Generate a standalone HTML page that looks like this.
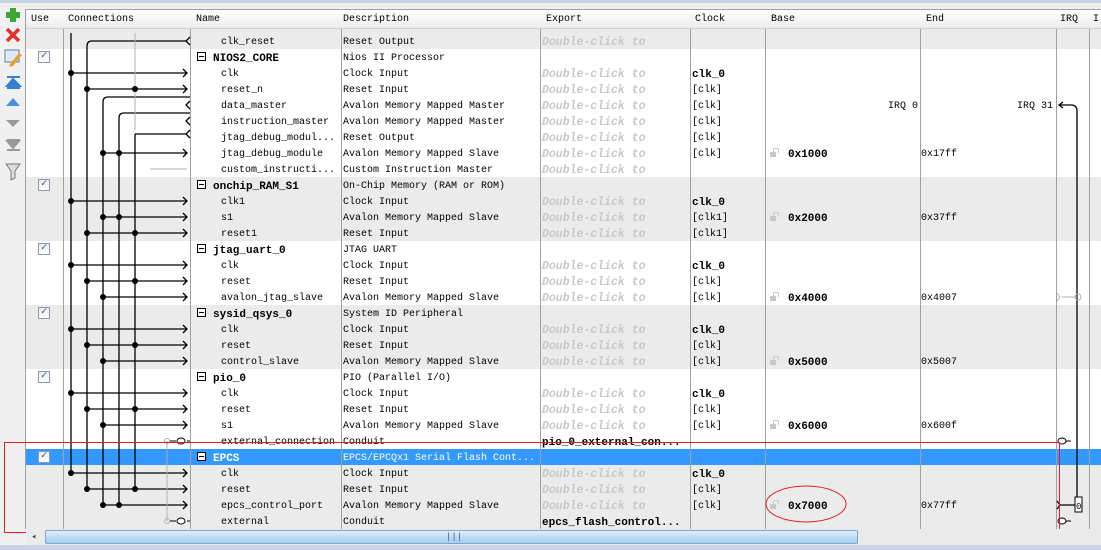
<!DOCTYPE html>
<html><head><meta charset="utf-8"><style>
*{margin:0;padding:0;box-sizing:border-box}
body{width:1101px;height:550px;overflow:hidden;background:#f0f0f0;font-family:"Liberation Mono",monospace;font-size:10px;color:#000;position:relative}
.abs{position:absolute}
#top{left:0;top:0;width:1101px;height:3px;background:#c5d3e6}
#tb{left:0;top:3px;width:25px;height:542px;background:#f0f0f0}
#tbl{left:25px;top:9px;width:1076px;height:520px;background:#fff;border-left:1px solid #a0a0a0;border-top:1px solid #a0a0a0}
#hdr{left:26px;top:10px;width:1075px;height:19px;background:linear-gradient(#ffffff,#ececec);border-bottom:1px solid #d0d0d0}
.h{position:absolute;top:11px;line-height:17px;font-size:10px}
.r{position:absolute;left:26px;width:1075px;height:16px;line-height:16px;white-space:nowrap}
.g{background:#ebebeb}
.w{background:#fff}
.s{background:#3399ff;color:#fff}
.r span{position:absolute;top:2px}
.n{left:195px}.nb{left:187px;font-weight:bold;font-size:11px}
.d{left:317px}
.e{left:516px;color:#c8c8c8;font-weight:bold;font-style:italic;font-size:11.5px}
.eb{left:516px;font-weight:bold;font-size:11px}
.c{left:666px}.cb{left:666px;font-weight:bold;font-size:11px}
.bv{left:762px;font-weight:bold;font-size:11px}
.r span.lk{left:744px;top:7px;width:6px;height:5px;background:#c8c8c8}
.r span.lk:before{content:"";position:absolute;left:3px;top:-4px;width:4px;height:4px;border:1px solid #c8c8c8;border-bottom:none;border-radius:2px 2px 0 0}
.en{left:895px}
.vl{position:absolute;top:29px;width:1px;height:500px;background:#a0a0a0}
.cb2{position:absolute;left:12px;top:2px;width:12px;height:12px;border:1px solid #8a9bb0;background:linear-gradient(#e8edf3,#fff);color:#2a4a8a;font-size:10px;line-height:10px;text-align:center}
.bx{position:absolute;left:171px;top:3px;width:9px;height:9px;border:1px solid #000;background:#fff}
.bx:after{content:"";position:absolute;left:1px;top:3px;width:5px;height:1px;background:#000}
#sb{left:26px;top:529px;width:1075px;height:16px;background:#eaeaea}
#th{left:45px;top:530px;width:813px;height:14px;border:1px solid #7ea6cf;border-radius:2px;background:linear-gradient(#e3f0fb,#bcdcf5 50%,#a6cdef)}
#bot{left:0;top:545px;width:1101px;height:5px;background:#c8d4e4}
</style></head><body>
<div id="top" class="abs"></div>
<div id="tb" class="abs"></div>
<svg class="abs" style="left:0;top:0" width="26" height="190">
<path d="M10 8h6v4h4v6h-4v4h-6v-4h-4v-6h4z" fill="#3aa63a"/>
<path d="M7 29l12 12M19 29l-12 12" stroke="#e03030" stroke-width="3.5"/>
<rect x="5" y="50" width="14" height="12" fill="#dfe9f5" stroke="#5a80b8"/><path d="M10 64l9-11 3 2-9 11-4 1z" fill="#e8a030"/>
<path d="M7 77h13M7 88h13M13 79l-6 7h13z" stroke="#3580d0" fill="#3580d0" stroke-width="2"/>
<path d="M6 106l7-8 7 8z" fill="#4a90d9"/>
<path d="M6 120l7 7 7-7z" fill="#999"/>
<path d="M7 140h13M7 150h13M7 141l6 7 6-7z" stroke="#999" fill="#999" stroke-width="2"/>
<path d="M6 164h14l-5 7v7l-4 2v-9z" fill="#ddd" stroke="#777"/>
</svg>
<div id="tbl" class="abs"></div>
<div id="hdr" class="abs"></div>
<div class="h" style="left:31px">Use</div>
<div class="h" style="left:68px">Connections</div>
<div class="h" style="left:196px">Name</div>
<div class="h" style="left:343px">Description</div>
<div class="h" style="left:546px">Export</div>
<div class="h" style="left:695px">Clock</div>
<div class="h" style="left:771px">Base</div>
<div class="h" style="left:926px">End</div>
<div class="h" style="left:1060px">IRQ</div>
<div class="h" style="left:1093px">I</div>

<div class="r g" style="top:29px;height:4px"></div>
<div class="r g" style="top:33px"><span class="n">clk_reset</span><span class="d">Reset Output</span><span class="e">Double-click to</span></div>
<div class="r w" style="top:49px"><div class="cb2">✓</div><div class="bx"></div><span class="nb">NIOS2_CORE</span><span class="d">Nios II Processor</span></div>
<div class="r w" style="top:65px"><span class="n">clk</span><span class="d">Clock Input</span><span class="e">Double-click to</span><span class="cb">clk_0</span></div>
<div class="r w" style="top:81px"><span class="n">reset_n</span><span class="d">Reset Input</span><span class="e">Double-click to</span><span class="c">[clk]</span></div>
<div class="r w" style="top:97px"><span class="n">data_master</span><span class="d">Avalon Memory Mapped Master</span><span class="e">Double-click to</span><span class="c">[clk]</span><span style="left:862px">IRQ 0</span><span style="left:991px">IRQ 31</span></div>
<div class="r w" style="top:113px"><span class="n">instruction_master</span><span class="d">Avalon Memory Mapped Master</span><span class="e">Double-click to</span><span class="c">[clk]</span></div>
<div class="r w" style="top:129px"><span class="n">jtag_debug_modul...</span><span class="d">Reset Output</span><span class="e">Double-click to</span><span class="c">[clk]</span></div>
<div class="r w" style="top:145px"><span class="n">jtag_debug_module</span><span class="d">Avalon Memory Mapped Slave</span><span class="e">Double-click to</span><span class="c">[clk]</span><span class="lk"></span><span class="bv">0x1000</span><span class="en">0x17ff</span></div>
<div class="r w" style="top:161px"><span class="n">custom_instructi...</span><span class="d">Custom Instruction Master</span><span class="e">Double-click to</span></div>
<div class="r g" style="top:177px"><div class="cb2">✓</div><div class="bx"></div><span class="nb">onchip_RAM_S1</span><span class="d">On-Chip Memory (RAM or ROM)</span></div>
<div class="r g" style="top:193px"><span class="n">clk1</span><span class="d">Clock Input</span><span class="e">Double-click to</span><span class="cb">clk_0</span></div>
<div class="r g" style="top:209px"><span class="n">s1</span><span class="d">Avalon Memory Mapped Slave</span><span class="e">Double-click to</span><span class="c">[clk1]</span><span class="lk"></span><span class="bv">0x2000</span><span class="en">0x37ff</span></div>
<div class="r g" style="top:225px"><span class="n">reset1</span><span class="d">Reset Input</span><span class="e">Double-click to</span><span class="c">[clk1]</span></div>
<div class="r w" style="top:241px"><div class="cb2">✓</div><div class="bx"></div><span class="nb">jtag_uart_0</span><span class="d">JTAG UART</span></div>
<div class="r w" style="top:257px"><span class="n">clk</span><span class="d">Clock Input</span><span class="e">Double-click to</span><span class="cb">clk_0</span></div>
<div class="r w" style="top:273px"><span class="n">reset</span><span class="d">Reset Input</span><span class="e">Double-click to</span><span class="c">[clk]</span></div>
<div class="r w" style="top:289px"><span class="n">avalon_jtag_slave</span><span class="d">Avalon Memory Mapped Slave</span><span class="e">Double-click to</span><span class="c">[clk]</span><span class="lk"></span><span class="bv">0x4000</span><span class="en">0x4007</span></div>
<div class="r g" style="top:305px"><div class="cb2">✓</div><div class="bx"></div><span class="nb">sysid_qsys_0</span><span class="d">System ID Peripheral</span></div>
<div class="r g" style="top:321px"><span class="n">clk</span><span class="d">Clock Input</span><span class="e">Double-click to</span><span class="cb">clk_0</span></div>
<div class="r g" style="top:337px"><span class="n">reset</span><span class="d">Reset Input</span><span class="e">Double-click to</span><span class="c">[clk]</span></div>
<div class="r g" style="top:353px"><span class="n">control_slave</span><span class="d">Avalon Memory Mapped Slave</span><span class="e">Double-click to</span><span class="c">[clk]</span><span class="lk"></span><span class="bv">0x5000</span><span class="en">0x5007</span></div>
<div class="r w" style="top:369px"><div class="cb2">✓</div><div class="bx"></div><span class="nb">pio_0</span><span class="d">PIO (Parallel I/O)</span></div>
<div class="r w" style="top:385px"><span class="n">clk</span><span class="d">Clock Input</span><span class="e">Double-click to</span><span class="cb">clk_0</span></div>
<div class="r w" style="top:401px"><span class="n">reset</span><span class="d">Reset Input</span><span class="e">Double-click to</span><span class="c">[clk]</span></div>
<div class="r w" style="top:417px"><span class="n">s1</span><span class="d">Avalon Memory Mapped Slave</span><span class="e">Double-click to</span><span class="c">[clk]</span><span class="lk"></span><span class="bv">0x6000</span><span class="en">0x600f</span></div>
<div class="r w" style="top:433px"><span class="n">external_connection</span><span class="d">Conduit</span><span class="eb">pio_0_external_con...</span></div>
<div class="r s" style="top:449px"><div class="cb2">✓</div><div class="bx"></div><span class="nb">EPCS</span><span class="d">EPCS/EPCQx1 Serial Flash Cont...</span></div>
<div class="r g" style="top:465px"><span class="n">clk</span><span class="d">Clock Input</span><span class="e">Double-click to</span><span class="cb">clk_0</span></div>
<div class="r g" style="top:481px"><span class="n">reset</span><span class="d">Reset Input</span><span class="e">Double-click to</span><span class="c">[clk]</span></div>
<div class="r g" style="top:497px"><span class="n">epcs_control_port</span><span class="d">Avalon Memory Mapped Slave</span><span class="e">Double-click to</span><span class="c">[clk]</span><span class="lk"></span><span class="bv">0x7000</span><span class="en">0x77ff</span></div>
<div class="r g" style="top:513px"><span class="n">external</span><span class="d">Conduit</span><span class="eb">epcs_flash_control...</span></div>

<div class="vl" style="left:63px"></div><div class="vl" style="left:190px"></div><div class="vl" style="left:341px"></div><div class="vl" style="left:540px"></div><div class="vl" style="left:690px"></div><div class="vl" style="left:765px"></div><div class="vl" style="left:920px"></div><div class="vl" style="left:1056px"></div><div class="vl" style="left:1089px"></div>

<svg class="abs" style="left:0;top:0" width="1101" height="550">
<g stroke="#000" stroke-width="1.3" fill="none">
<path d="M71 33V473M87 489V46q0-5 5-5h95M103 505V102q0-5 5-5h82M119 505V118q0-5 5-5h66M135 489V134M135 134h52"/>
<path d="M71 73h116M87 89h100M103 153h84M71 201h116M103 217h84M87 233h100M71 265h116M87 281h100M103 297h84M71 329h116M87 345h100M103 361h84M71 393h116M87 409h100M103 425h84M71 473h116M87 489h100M103 505h84"/>
<path d="M183 69l4 4-4 4M183 85l4 4-4 4M183 149l4 4-4 4M183 197l4 4-4 4M183 213l4 4-4 4M183 229l4 4-4 4M183 261l4 4-4 4M183 277l4 4-4 4M183 293l4 4-4 4M183 325l4 4-4 4M183 341l4 4-4 4M183 357l4 4-4 4M183 389l4 4-4 4M183 405l4 4-4 4M183 421l4 4-4 4M183 469l4 4-4 4M183 485l4 4-4 4M183 501l4 4-4 4"/>
<path d="M190 37l-4 4 4 4M190 101l-4 4 4 4M190 117l-4 4 4 4M190 130l-4 4 4 4"/>
<path d="M1077 505V111q0-6-6-6h-12M1063 102l-4 3 4 3M1057 501l3 4-3 4M1060 505h16"/>
</g>
<g stroke="#b0b0b0" fill="none"><path d="M135 33V130M150 169h37M167 441V521M1062 297h15M1057 293l3 4-3 4"/><circle cx="1078" cy="297" r="3"/><circle cx="167" cy="441" r="2.5"/><circle cx="167" cy="521" r="2.5"/></g>
<g fill="#000"><circle cx="71" cy="73" r="3"/><circle cx="87" cy="89" r="3"/><circle cx="135" cy="89" r="3"/><circle cx="103" cy="153" r="3"/><circle cx="119" cy="153" r="3"/><circle cx="71" cy="201" r="3"/><circle cx="103" cy="217" r="3"/><circle cx="119" cy="217" r="3"/><circle cx="87" cy="233" r="3"/><circle cx="135" cy="233" r="3"/><circle cx="71" cy="265" r="3"/><circle cx="87" cy="281" r="3"/><circle cx="135" cy="281" r="3"/><circle cx="103" cy="297" r="3"/><circle cx="71" cy="329" r="3"/><circle cx="87" cy="345" r="3"/><circle cx="135" cy="345" r="3"/><circle cx="103" cy="361" r="3"/><circle cx="71" cy="393" r="3"/><circle cx="87" cy="409" r="3"/><circle cx="135" cy="409" r="3"/><circle cx="103" cy="425" r="3"/><circle cx="71" cy="473" r="3"/><circle cx="87" cy="489" r="3"/><circle cx="135" cy="489" r="3"/><circle cx="103" cy="505" r="3"/><circle cx="119" cy="505" r="3"/></g>
<g stroke="#000" fill="#fff"><ellipse cx="181" cy="441" rx="4" ry="3"/><ellipse cx="181" cy="521" rx="4" ry="3"/><path d="M176 441h-6M176 521h-6M187 441h3M187 521h3" fill="none"/>
<ellipse cx="1062" cy="441" rx="4" ry="3"/><ellipse cx="1062" cy="521" rx="4" ry="3"/><path d="M1066 441h5M1066 521h5" fill="none"/><rect x="1075" y="497" width="7" height="15"/></g>
<text x="1076" y="509" font-size="9" font-family="Liberation Mono">0</text>
<rect x="4.5" y="442.5" width="1055" height="90" fill="none" stroke="#e02020"/>
<ellipse cx="806" cy="504" rx="40" ry="18" fill="none" stroke="#e02020"/>
</svg>
<div id="sb" class="abs"></div>
<div class="abs" style="left:31px;top:529px;font-size:9px;line-height:16px;color:#444">◂</div>
<div id="th" class="abs"></div>
<div class="abs" style="left:446px;top:530px;font-size:9px;line-height:14px;color:#34598a">|||</div>
<div id="bot" class="abs"></div>
</body></html>
